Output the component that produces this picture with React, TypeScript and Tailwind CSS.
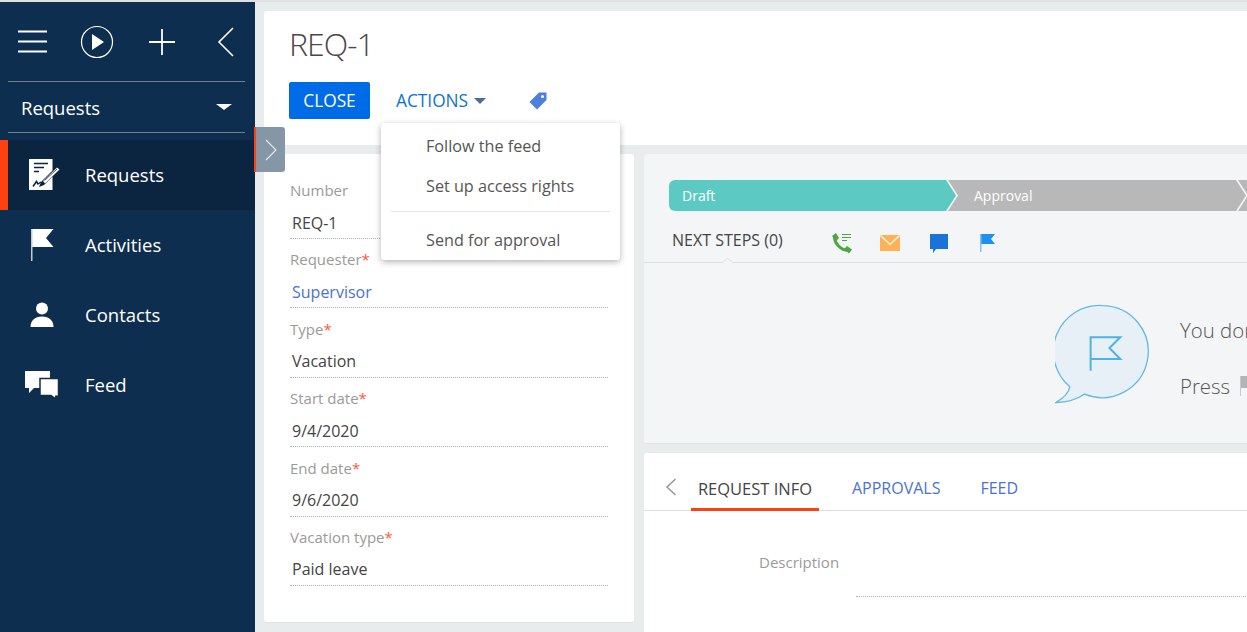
import React from "react";

const navItems = [
  { label: "Requests", icon: RequestsIcon, active: true },
  { label: "Activities", icon: FlagIcon },
  { label: "Contacts", icon: ContactIcon },
  { label: "Feed", icon: FeedIcon },
];

const fields = [
  { label: "Number", value: "REQ-1" },
  { label: "Requester", value: "Supervisor", required: true, link: true },
  { label: "Type", value: "Vacation", required: true },
  { label: "Start date", value: "9/4/2020", required: true },
  { label: "End date", value: "9/6/2020", required: true },
  { label: "Vacation type", value: "Paid leave", required: true },
];

function RequestsIcon() {
  return (
    <svg width="31" height="32" viewBox="0 0 31 32" className="ml-[4px]">
      <path d="M0 0h23.500v11.500L12 23l-2 5 5-2 8.500-8.500V31H0z" fill="#fff" />
      <path d="M5 4.500h14M5 8.500h10M5 12.500h5" stroke="#0b2540" strokeWidth="1.500" />
      <path d="M4 27.500l3.500-5 1.500 2.500 3-2" stroke="#0b2540" strokeWidth="1.500" fill="none" />
      <path d="M14 22L28 8.500l2.500 2L16 24.500z" fill="#fff" />
      <path d="M15.500 21.500l12.500-11.500" stroke="#0b2540" strokeWidth="0.800" />
    </svg>
  );
}

function FlagIcon() {
  return (
    <svg width="23" height="32" viewBox="0 0 23 32" className="ml-[6px]">
      <path d="M1 0h21.500l-7.500 9 7.500 9H1z" fill="#fff" />
      <path d="M0 0h1.500v32H0z" fill="#c5ccd4" />
    </svg>
  );
}

function ContactIcon() {
  return (
    <svg width="24" height="26" viewBox="0 0 24 26" className="ml-[5px]">
      <circle cx="12" cy="6.500" r="6" fill="#fff" />
      <path d="M0.500 25c0-6 4-10.500 11.500-10.500S23.500 19 23.500 25z" fill="#fff" />
    </svg>
  );
}

function FeedIcon() {
  return (
    <svg width="34" height="28" viewBox="0 0 34 28">
      <path d="M0 0h25v17H9l-5 5v-5H0z" fill="#fff" />
      <path d="M15 7.500h18.500v18l-2.500-.5-1 2.500-4-3H15z" fill="#fff" stroke="#0d2e4e" strokeWidth="1.500" />
    </svg>
  );
}

function TopIcons() {
  return (
    <div className="flex items-center h-[79px] pl-[18px] shrink-0">
      <svg width="30" height="24" viewBox="0 0 30 24" className="shrink-0">
        <path d="M0 1.500h29M0 11.500h29M0 21.500h29" stroke="#fff" strokeWidth="2" />
      </svg>
      <svg width="34" height="34" viewBox="0 0 34 34" className="ml-[32px] shrink-0">
        <circle cx="17" cy="17" r="15.500" fill="none" stroke="#fff" strokeWidth="1.200" />
        <path d="M12 9l12 8-12 8z" fill="#fff" />
      </svg>
      <svg width="26" height="26" viewBox="0 0 26 26" className="ml-[35px] shrink-0">
        <path d="M0 13h26M13 0v26" stroke="#fff" strokeWidth="1.800" />
      </svg>
      <svg width="18" height="30" viewBox="0 0 18 30" className="ml-[42px] shrink-0">
        <path d="M16 1L2 15l14 14" stroke="#fff" strokeWidth="1.600" fill="none" />
      </svg>
    </div>
  );
}

function Sidebar() {
  return (
    <aside className="w-[255px] shrink-0 h-full bg-[#0d2e4e] flex flex-col">
      <TopIcons />
      <div className="mx-2 h-[52px] w-[237px] shrink-0 border-y border-[#6e8093] flex items-center justify-between pl-[13px] pr-[13px] text-[18.500px] text-white">
        <span className="pt-[1px]">Requests</span>
        <span className="w-0 h-0 border-x-[8px] border-x-transparent border-t-[6px] border-t-white" />
      </div>
      <nav className="mt-[7px] flex flex-col">
        {navItems.map((item) => {
          const Icon = item.icon;
          return (
            <div
              key={item.label}
              className={
                item.active
                  ? "h-[70px] flex items-center bg-[#0b2540] border-l-[8px] border-[#ff4013] text-[18.500px] text-white"
                  : "h-[70px] flex items-center pl-[8px] text-[18.500px] text-white"
              }
            >
              <div className="w-[77px] pl-[17px] flex items-center">
                <Icon />
              </div>
              <span>{item.label}</span>
            </div>
          );
        })}
      </nav>
    </aside>
  );
}

function Header() {
  return (
    <div className="h-[134px] shrink-0 bg-white rounded-tl-[3px] pl-[25px]">
      <h1 className="pt-[12px] h-[71px] text-[32px] tracking-[-1px] leading-[42px] font-light text-[#4f4548]">REQ-1</h1>
      <div className="flex items-center">
        <button className="h-[37px] w-[81px] rounded-[2px] bg-[#006be6] text-white text-[17.300px]">CLOSE</button>
        <button className="ml-[26px] flex items-center text-[#0d6fe0] text-[17.300px]">
          ACTIONS
          <span className="ml-[6px] w-0 h-0 border-x-[6px] border-x-transparent border-t-[6px] border-t-[#4a6c9c]" />
        </button>
        <svg width="18" height="18" viewBox="0 0 18 18" className="ml-[43px]">
          <path d="M10 .5h7.500V8L8 17.500 .5 10z" fill="#4f7fdc" />
          <circle cx="13.500" cy="4.500" r="1.500" fill="#fff" />
        </svg>
      </div>
    </div>
  );
}

function DetailsCard() {
  return (
    <div className="w-[370px] h-[469px] shrink-0 bg-white rounded-[3px] border-b border-[#dfe3e6] pl-[26px] pr-[26px] pt-[26px]">
      {fields.map((f) => (
        <div key={f.label} className="h-[69.400px] flex flex-col">
          <div className="text-[15px] leading-[21px] text-[#9a9a9a]">
            {f.label}
            {f.required && <span className="text-[#ff5a3c]">*</span>}
          </div>
          <div
            className={
              f.link
                ? "mt-[10.500px] pl-[2px] h-[27.500px] text-[16px] leading-[23px] text-[#4b72cf] border-b border-dotted border-[#b5b5b5]"
                : "mt-[10.500px] pl-[2px] h-[27.500px] text-[16px] leading-[23px] text-[#444] border-b border-dotted border-[#b5b5b5]"
            }
          >
            {f.value}
          </div>
        </div>
      ))}
    </div>
  );
}

function Stages() {
  return (
    <div className="flex h-[31px] ml-[25px] text-white text-[14px] leading-[31px]">
      <div className="w-[287px] shrink-0 pl-[13px] bg-[#5cc9c3] rounded-l-[6px] [clip-path:polygon(0_0,277px_0,287px_50%,277px_100%,0_100%)]">
        Draft
      </div>
      <div className="w-[298px] shrink-0 -ml-[8px] pl-[26px] bg-[#b8b8b8] [clip-path:polygon(0_0,288px_0,298px_50%,288px_100%,0_100%,10px_50%)]">
        Approval
      </div>
      <div className="w-[200px] shrink-0 -ml-[8px] bg-[#b8b8b8] [clip-path:polygon(0_0,100%_0,100%_100%,0_100%,10px_50%)]" />
    </div>
  );
}

function NextSteps() {
  return (
    <div className="relative h-[52px] border-b border-[#dcdee1] flex items-center pl-[28px] pt-[6px]">
      <span className="text-[16px] text-[#444] w-[159px] shrink-0">NEXT STEPS (0)</span>
      <svg width="21" height="21" viewBox="0 0 21 21" className="mt-[7px] shrink-0">
        <path d="M3.500 3C3 10 10 18 18 17.500" fill="none" stroke="#4ba83f" strokeWidth="3" />
        <path d="M1 3l4-3 3 5-3 3zM13 16l3-3 5 3.500-3 4z" fill="#4ba83f" />
        <path d="M11 1.500h9M11 4.500h9M11 7.500h5" stroke="#4ba83f" strokeWidth="1.200" />
      </svg>
      <svg width="20" height="16" viewBox="0 0 20 16" className="ml-[28px] mt-[7px] shrink-0">
        <path d="M0 0h20v16H0z" fill="#ffb155" />
        <path d="M0.500 .5L10 9.500 19.500 .5" stroke="#fff" strokeWidth="1.200" fill="none" />
      </svg>
      <svg width="18" height="19" viewBox="0 0 18 19" className="ml-[30px] mt-[7px] shrink-0">
        <path d="M0 0h18v15H6l-3 4v-4H0z" fill="#1b73d8" />
      </svg>
      <svg width="15" height="18" viewBox="0 0 15 18" className="ml-[32px] mt-[7px] shrink-0">
        <path d="M1 0h14l-4 5 4 5H1z" fill="#1e90f0" />
        <path d="M0 0h1.500v18H0z" fill="#7fc0f5" />
      </svg>
      <span className="absolute left-[77px] bottom-[-1px] w-[13px] h-[5px] bg-[#dcdee1] [clip-path:polygon(0_100%,50%_0,100%_100%)]" />
      <span className="absolute left-[78px] bottom-[-1px] w-[11px] h-[4px] bg-[#f3f5f7] [clip-path:polygon(0_100%,50%_0,100%_100%)]" />
    </div>
  );
}

function EmptyState() {
  return (
    <div className="flex pl-[411px] pt-[41px]">
      <svg width="95" height="102" viewBox="0 0 96 102" className="shrink-0">
        <path
          d="M48 1a46.500 46.500 0 1 1-18 89.500C22 96 12 99 1 99c7-4 13-10 14-16A46.500 46.500 0 0 1 48 1z"
          fill="#e7f0f7"
          stroke="#63b9e3"
          strokeWidth="1.300"
        />
        <path d="M36 67V33h30l-11 11 11 11H36" fill="none" stroke="#4cb3e4" strokeWidth="2" />
      </svg>
      <div className="ml-[30px] text-[20.400px] font-light text-[#555] whitespace-nowrap">
        <div className="h-[56px] pt-[10px] leading-[32px]">You don't</div>
        <div className="flex items-center h-[40px] pt-[11px] leading-[32px]">
          Press
          <svg width="12" height="20" viewBox="0 0 12 20" className="ml-[10px]">
            <path d="M1 0h11v12H1z" fill="#b4b4b4" />
            <path d="M0 0h1v20H0z" fill="#c9c9c9" />
          </svg>
        </div>
      </div>
    </div>
  );
}

function Tabs() {
  return (
    <div className="h-[179px] bg-white rounded-t-[3px]">
      <div className="h-[58px] border-b border-[#dcdee1] flex items-end">
        <svg width="12" height="18" viewBox="0 0 12 18" className="ml-[21px] mb-[14px] shrink-0">
          <path d="M10.500 1L2 9l8.500 8" fill="none" stroke="#9a9a9a" strokeWidth="1.600" />
        </svg>
        <div className="ml-[14px] w-[128px] h-[37px] text-center border-b-[3px] border-[#ff4013] text-[16.500px] leading-[30px] text-[#444] -mb-px">
          REQUEST INFO
        </div>
        <span className="ml-[33px] h-[36px] text-[16px] leading-[29px] text-[#4b72cf]">APPROVALS</span>
        <span className="ml-[40px] h-[36px] text-[16px] leading-[29px] text-[#4b72cf]">FEED</span>
      </div>
      <div className="flex pl-[115px] pt-[40px]">
        <span className="w-[97px] text-[15px] leading-[22px] text-[#9a9a9a]">Description</span>
        <span className="h-[46px] w-[500px] border-b border-dotted border-[#b5b5b5]" />
      </div>
    </div>
  );
}

export default function App() {
  return (
    <div className="relative w-[1247px] h-[632px] overflow-hidden bg-[#e9eced] font-['Open_Sans',sans-serif] flex flex-col">
      <div className="h-[2px] shrink-0 bg-[#dfe1e3]" />
      <div className="flex-1 min-h-0 flex">
        <Sidebar />
        <main className="flex-1 min-w-0 overflow-hidden pl-[9px] pt-[9px] flex flex-col">
          <Header />
          <div className="flex gap-[10px] pt-[9px]">
            <DetailsCard />
            <div className="w-[900px] shrink-0 flex flex-col gap-[9px]">
              <div className="h-[290px] shrink-0 bg-[#f3f5f7] rounded-[3px] border-b border-[#dfe3e6] pt-[26px]">
                <Stages />
                <NextSteps />
                <EmptyState />
              </div>
              <Tabs />
            </div>
          </div>
        </main>
      </div>

      {/* section expander */}
      <div className="absolute left-[254px] top-[127px] w-[31px] h-[45px] bg-[#8596a6] border-l-2 border-[#ff4013] rounded-r-[3px] flex items-center justify-center">
        <svg width="12" height="22" viewBox="0 0 12 22">
          <path d="M1 1l10 10L1 21" fill="none" stroke="#e8ecef" strokeWidth="1.100" />
        </svg>
      </div>

      {/* actions menu */}
      <div className="absolute left-[381px] top-[123px] w-[239px] h-[137px] bg-white rounded-[3px] shadow-[0_2px_6px_rgba(0,0,0,0.3)] text-[16.200px] text-[#555] pt-[3px]">
        <div className="h-[40px] pl-[45px] leading-[40px]">Follow the feed</div>
        <div className="h-[40px] pl-[45px] leading-[40px]">Set up access rights</div>
        <div className="mx-[10px] mt-[5px] h-px bg-[#e4e4e4]" />
        <div className="mt-[8px] h-[40px] pl-[45px] leading-[40px]">Send for approval</div>
      </div>
    </div>
  );
}
